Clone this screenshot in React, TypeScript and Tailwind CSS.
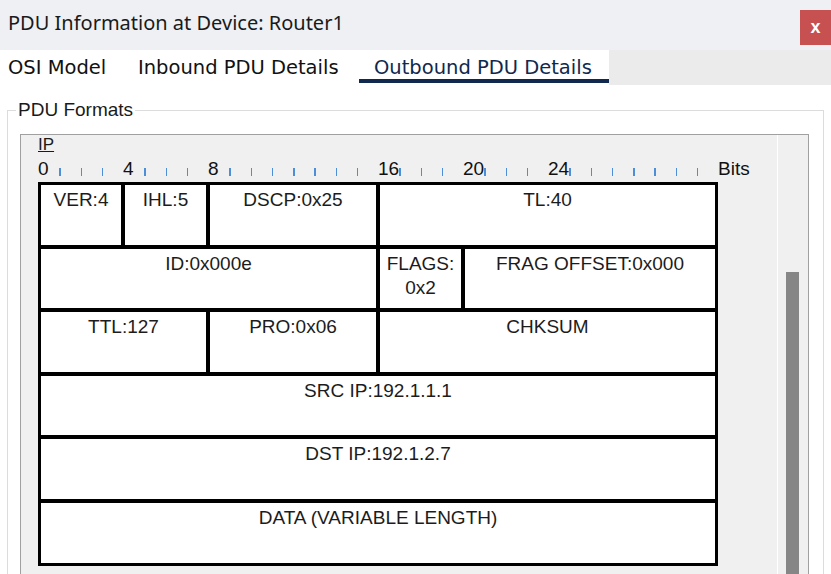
import React from 'react';

const LABELS: Record<number, string> = { 0: '0', 4: '4', 8: '8', 16: '16', 20: '20', 24: '24' };

const Cell: React.FC<{ children?: React.ReactNode }> = ({ children }) => (
  <div className="bg-white text-center pt-[3px] leading-[24px] text-[19px] text-[#1c1c1c]">{children}</div>
);

const App: React.FC = () => {
  const bits = Array.from({ length: 32 }, (_, i) => i);

  return (
    <div className="w-[831px] h-[574px] overflow-hidden bg-white font-['Liberation_Sans',Arial,sans-serif]">
      {/* title bar */}
      <div className="h-[50px] bg-[#eef0f3] flex justify-between items-start">
        <div className="pl-[8px] pt-[9px] text-[20px] leading-[28px] text-[#1a1a1a] font-['Noto_Sans',sans-serif]">
          PDU Information at Device: Router1
        </div>
        <div className="mt-[10px] w-[31px] h-[35px] bg-[#c75050] flex items-center justify-center text-white font-bold text-[18px] leading-none pb-[2px]">
          x
        </div>
      </div>

      {/* tabs */}
      <div className="h-[35px] flex bg-[#ebebeb] font-['DejaVu_Sans',sans-serif] text-[19.5px] leading-[24px] text-[#111]">
        <div className="flex bg-white items-start">
          <div className="w-[123px] pl-[8px] pt-[6px]">OSI Model</div>
          <div className="w-[236px] pl-[15px] pt-[6px]">Inbound PDU Details</div>
          <div className="w-[250px] h-[33px] pl-[15px] pt-[6px] border-b-[4px] border-[#12294f] text-[#10284d]">
            Outbound PDU Details
          </div>
        </div>
      </div>

      {/* group box */}
      <div className="mt-[25px] ml-[7px] w-[817px] h-[600px] border border-[#dcdcdc] relative pt-[23px] pl-[12px]">
        <div className="absolute left-[8px] top-[-12px] bg-white px-[2px] text-[19px] leading-[22px] text-[#1a1a1a]">
          PDU Formats
        </div>

        <div className="w-[789px] h-[460px] flex bg-[#f0f0f0] border-t border-l border-r border-[#a0a0a0]">
          <div className="flex-1 pl-[17px]">
            <div className="text-[17px] leading-[20px] underline text-[#1a1a1a]">IP</div>

            <div className="h-[27px] flex items-end">
              {bits.map((b) => (
                <div key={b} className="w-[21.25px] shrink-0 flex items-end">
                  {LABELS[b] !== undefined ? (
                    <span className="text-[19px] leading-[20px] mb-[3px] text-[#111]">{LABELS[b]}</span>
                  ) : (
                    <div className="w-[1.5px] h-[8px] mb-[6px] bg-[#4d8fd6]" />
                  )}
                </div>
              ))}
              <span className="text-[19px] leading-[20px] mb-[3px] text-[#111]">Bits</span>
            </div>

            <div className="w-[680px] bg-black p-[3px] flex flex-col gap-[4px]">
              <div className="grid grid-cols-[80px_81px_166px_1fr] gap-[4px] h-[60px]">
                <Cell>VER:4</Cell>
                <Cell>IHL:5</Cell>
                <Cell>DSCP:0x25</Cell>
                <Cell>TL:40</Cell>
              </div>
              <div className="grid grid-cols-[335px_81px_1fr] gap-[4px] h-[59px]">
                <Cell>ID:0x000e</Cell>
                <Cell>
                  FLAGS:
                  <br />
                  0x2
                </Cell>
                <Cell>FRAG OFFSET:0x000</Cell>
              </div>
              <div className="grid grid-cols-[165px_166px_1fr] gap-[4px] h-[60px]">
                <Cell>TTL:127</Cell>
                <Cell>PRO:0x06</Cell>
                <Cell>CHKSUM</Cell>
              </div>
              <div className="grid grid-cols-1 h-[59px]">
                <Cell>SRC IP:192.1.1.1</Cell>
              </div>
              <div className="grid grid-cols-1 h-[60px]">
                <Cell>DST IP:192.1.2.7</Cell>
              </div>
              <div className="grid grid-cols-1 h-[60px]">
                <Cell>DATA (VARIABLE LENGTH)</Cell>
              </div>
            </div>
          </div>

          {/* scrollbar */}
          <div className="w-[31px] border-l border-white flex flex-col">
            <div className="mt-[137px] ml-[8px] w-[13px] flex-1 bg-[#868686]" />
          </div>
        </div>
      </div>
    </div>
  );
};

export default App;
